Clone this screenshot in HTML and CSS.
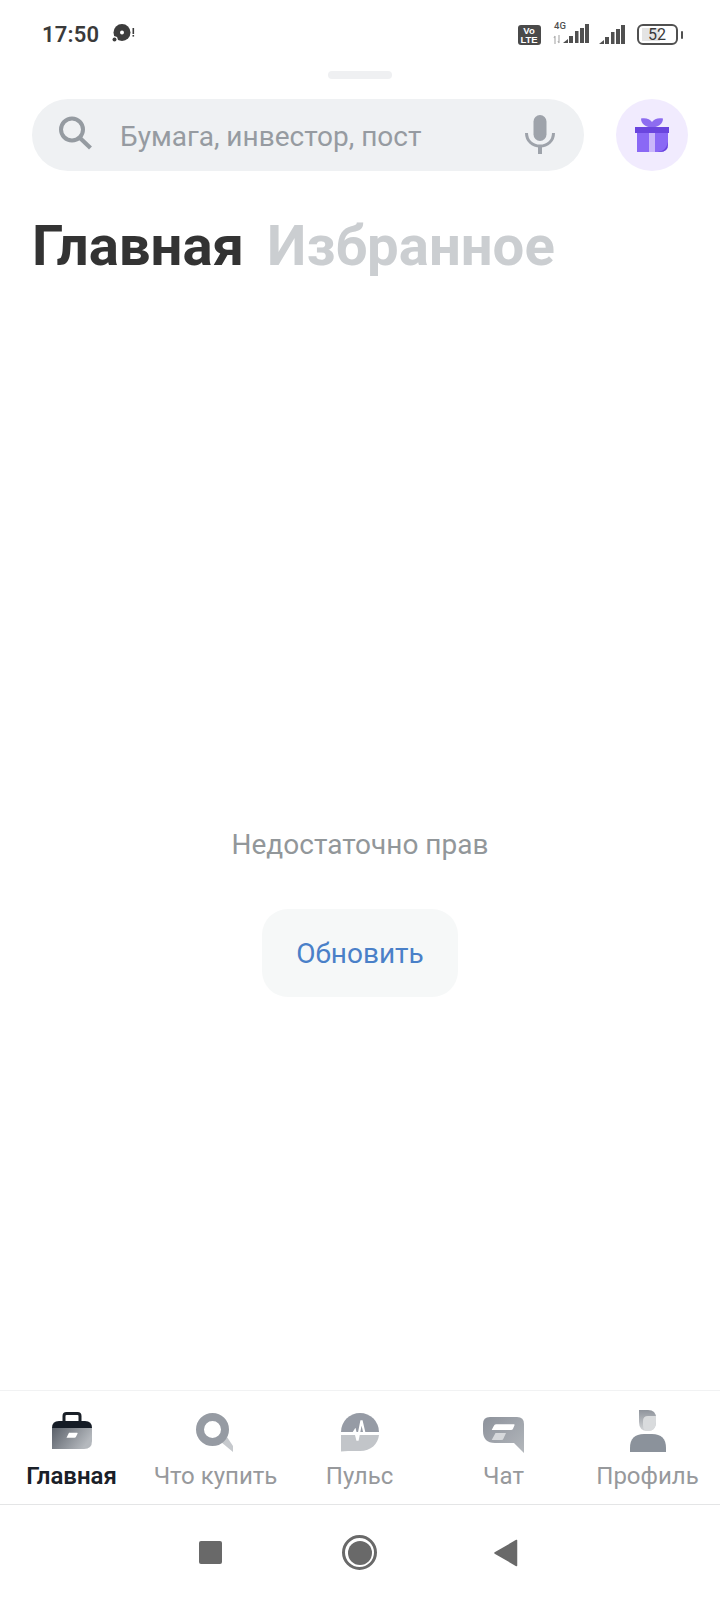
FILE: index.html
```html
<!DOCTYPE html>
<html lang="ru">
<head>
<meta charset="utf-8">
<title>Главная</title>
<link rel="stylesheet" href="styles.css">
</head>
<body>
<div class="screen">
  <header class="status">
    <div class="status-left">
      <span class="time">17:50</span>
      <svg class="disc" width="24" height="20" viewBox="0 0 24 20">
        <circle cx="11" cy="9.500" r="8.500" fill="#3c3c3c"/>
        <circle cx="11" cy="9.500" r="2" fill="#fff"/>
        <circle cx="3.500" cy="16.500" r="3.200" fill="#fff"/>
        <circle cx="3.500" cy="16.500" r="2" fill="#3c3c3c"/>
        <rect x="21.500" y="5" width="1.600" height="6" fill="#3c3c3c"/>
        <rect x="21.500" y="12" width="1.600" height="1.600" fill="#3c3c3c"/>
      </svg>
    </div>
    <div class="status-right">
      <span class="volte">Vo<br>LTE</span>
      <svg width="38" height="26" viewBox="0 -2 38 26" class="sig-4g">
        <text x="1" y="8" class="g4">4G</text>
        <path d="M2 15v8M1 17l1-2M6 14v8M5 20l1 2" stroke="#b0b0b0" stroke-width="1.200" fill="none"/>
        <path d="M10 22l5-4v4zM16 15h4v7h-4zM22 10h3.500v12H22zM27 7h4v15h-4zM32 3h4v19h-4z" fill="#505050"/>
      </svg>
      <svg width="28" height="20" viewBox="0 0 28 20" class="sig">
        <path d="M0 19l5-4v4zM6 12h4v7H6zM12 7h3.500v12H12zM17 4h4v15h-4zM22 0h4v19h-4z" fill="#505050"/>
      </svg>
      <div class="battery">
        <span class="batt-body"><span class="batt-fill"></span><span class="batt-num">52</span></span>
        <span class="batt-tip"></span>
      </div>
    </div>
  </header>

  <div class="grabber"></div>

  <div class="search-row">
    <div class="search">
      <svg class="search-icon" width="36" height="36" viewBox="0 0 36 36">
        <circle cx="15" cy="14.500" r="11" fill="none" stroke="#959ba1" stroke-width="4"/>
        <path d="M23 23l10.500 10" stroke="#959ba1" stroke-width="4.200"/>
      </svg>
      <span class="placeholder">Бумага, инвестор, пост</span>
      <svg class="mic" width="30" height="40" viewBox="0 0 30 40">
        <rect x="8.500" y="0" width="13" height="26" rx="6.500" fill="#9ea3aa"/>
        <path d="M1.500 18c0 8 6 13 13.500 13s13.500-5 13.500-13" fill="none" stroke="#9ea3aa" stroke-width="3"/>
        <rect x="13" y="30" width="4" height="9" fill="#9ea3aa"/>
      </svg>
    </div>
    <div class="gift">
      <svg width="36" height="36" viewBox="0 0 36 36">
        <path d="M18 10.500C12 10.500 7 7 7 1.500 12 .5 16 2 18 5 20 2 24 .5 29 1.500 29 7 24 10.500 18 10.500z" fill="#8d6cf0"/>
        <rect x="1" y="10" width="34" height="6" fill="#6a45de"/>
        <path d="M3 16h31v11q0 8-8 8H3z" fill="#8a68f5"/>
        <rect x="15" y="16" width="6" height="19" fill="#c9b6fa"/>
        <path d="M21 35c7 0 11-2 13-10v2q0 8-8 8z" fill="#6a45de"/>
      </svg>
    </div>
  </div>

  <div class="tabs">
    <span class="tab active">Главная</span>
    <span class="tab">Избранное</span>
  </div>

  <main class="content">
    <p class="message">Недостаточно прав</p>
    <button class="refresh">Обновить</button>
  </main>

  <nav class="bottom-nav">
    <div class="nav-item current">
      <svg width="48" height="50" viewBox="0 0 48 50">
        <defs>
          <linearGradient id="bag" x1="0" y1="0" x2="1" y2="0.400">
            <stop offset="0" stop-color="#5b616a"/>
            <stop offset="1" stop-color="#b4b8bd"/>
          </linearGradient>
        </defs>
        <path d="M16 17v-5q0-2.500 2.500-2.500h11Q32 9.500 32 12v5" fill="none" stroke="#1a2028" stroke-width="3"/>
        <path d="M4 24q0-7 7-7h26q7 0 7 7z" fill="#151c26"/>
        <path d="M4 24h40v13q0 8-8 8H4z" fill="url(#bag)"/>
        <path d="M21 28.700h8q1 0 .5 1l-1.500 3q-.5 1-1.500 1H18.500z" fill="#fff"/>
      </svg>
      <span class="nav-label">Главная</span>
    </div>
    <div class="nav-item">
      <svg width="48" height="50" viewBox="0 0 48 50">
        <path d="M29 38l6-5 6 9v6z" fill="#c6c9cd"/>
        <circle cx="20.500" cy="25.500" r="12.500" fill="none" stroke="#969ba3" stroke-width="8"/>
      </svg>
      <span class="nav-label">Что купить</span>
    </div>
    <div class="nav-item">
      <svg width="48" height="50" viewBox="0 0 48 50">
        <path d="M5 28A19 19 0 0 1 43 28z" fill="#969ba5"/>
        <path d="M5 31H43C42 40 35 47 24 47H12L5 47.500z" fill="#c2c5c9"/>
        <path d="M5 29.500H17l2-3 2.500 10 4-20 3 13h14.500" fill="none" stroke="#fff" stroke-width="2.200"/>
      </svg>
      <span class="nav-label">Пульс</span>
    </div>
    <div class="nav-item">
      <svg width="48" height="50" viewBox="0 0 48 50">
        <defs>
          <linearGradient id="chat" x1="0" y1="0" x2="1" y2="1">
            <stop offset="0" stop-color="#8d929b"/>
            <stop offset="1" stop-color="#b3b7bc"/>
          </linearGradient>
        </defs>
        <path d="M10 13H37q7 0 7 7V49L34 39H15Q3 39 3 27V20q0-7 7-7z" fill="url(#chat)"/>
        <path d="M16 20.300h18q1 0 .5 1l-1.500 3.500q-.5 1.200-2 1.200H11.700l1.800-3.500q1-2.200 2.500-2.200z" fill="#fff"/>
        <path d="M15.500 29H26l-2.500 5.500q-.5 1.500-2 1.500h-9.800z" fill="#d6d8db"/>
      </svg>
      <span class="nav-label">Чат</span>
    </div>
    <div class="nav-item">
      <svg width="48" height="50" viewBox="0 0 48 50">
        <defs>
          <linearGradient id="hair" x1="0" y1="0" x2="0" y2="1">
            <stop offset="0" stop-color="#8f949c"/>
            <stop offset="1" stop-color="#d4d6d8"/>
          </linearGradient>
        </defs>
        <path d="M15 6H24q8 0 8 8v4q0 9-8.500 9T15 18z" fill="url(#hair)"/>
        <path d="M19 17q0-5 5-5h8v6q0 9-8.500 9-4.500 0-4.500-6z" fill="#d9dbdd"/>
        <path d="M6 48V44Q6 30 20 30h8q14 0 14 14v4z" fill="#8b929b"/>
      </svg>
      <span class="nav-label">Профиль</span>
    </div>
  </nav>

  <footer class="sys-nav">
    <span class="sys-square"></span>
    <span class="sys-home"><span class="sys-home-dot"></span></span>
    <svg width="24" height="28" viewBox="0 0 24 28" class="sys-back">
      <path d="M22.500 1.500v25L1 14z" fill="#696969" stroke="#696969" stroke-width="1.500" stroke-linejoin="round"/>
    </svg>
  </footer>
</div>
</body>
</html>
```

FILE: styles.css
```css
* { box-sizing: border-box; }
html, body { margin: 0; padding: 0; background: #fff; }
body { font-family: Roboto, "Noto Sans", sans-serif; }
.screen { width: 720px; height: 1600px; display: flex; flex-direction: column; background: #fff; overflow: hidden; }

.status { height: 71px; flex: none; display: flex; justify-content: space-between; align-items: center; padding: 0 37px 2px 42px; }
.status-left { display: flex; align-items: center; gap: 12px; }
.time { font-size: 22px; font-weight: 600; color: #3a3a3a; letter-spacing: .2px; }
.disc { margin-top: -3px; }
.status-right { display: flex; align-items: center; }
.volte { width: 23px; height: 20px; border-radius: 3px; background: #4a4a4a; color: #fff; font: 700 9.500px/9px "Liberation Sans", sans-serif; text-align: center; padding-top: 1px; margin-right: 12px; }
.sig-4g { margin-top: -5px; margin-right: 8px; overflow: visible; }
.g4 { font: 500 9.500px Roboto, sans-serif; fill: #505050; }
.sig { margin-right: 10px; }
.battery { display: flex; align-items: center; gap: 3px; }
.batt-body { position: relative; width: 41px; height: 21px; border: 2.500px solid #505050; border-radius: 6px; display: flex; align-items: center; justify-content: center; }
.batt-fill { position: absolute; left: 3px; top: 2px; bottom: 2px; width: 18px; background: #e4e4e4; }
.batt-num { position: relative; font-size: 16px; color: #3a3a3a; line-height: 1; }
.batt-tip { width: 2.500px; height: 8px; background: #505050; border-radius: 1px; }

.grabber { flex: none; width: 64px; height: 8px; border-radius: 4px; background: #eff0f2; margin: 0 auto; }

.search-row { flex: none; display: flex; gap: 32px; padding: 20px 32px 0; }
.search { flex: 1; height: 72px; border-radius: 36px; background: #eff1f3; display: flex; align-items: center; padding: 0 30px 0 25px; }
.search-icon { flex: none; margin-top: -4px; }
.placeholder { flex: 1; font-size: 28px; color: #969ba1; margin-left: 27px; padding-top: 2px; }
.mic { flex: none; margin-top: 0; margin-right: -1px; }
.gift { flex: none; width: 72px; height: 72px; border-radius: 50%; background: #f1ebfe; display: flex; align-items: center; justify-content: center; }

.tabs { flex: none; display: flex; gap: 23px; padding: 43px 32px 0; }
.tab { font-size: 56.300px; font-weight: 700; line-height: 64px; color: #cbced1; }
.tab.active { color: #333; }

.content { flex: 1; display: flex; flex-direction: column; align-items: center; padding-top: 549px; }
.message { margin: 0; font-size: 28px; line-height: 36px; color: #92979a; }
.refresh { margin-top: 46px; width: 196px; height: 88px; border: none; border-radius: 26px; background: #f6f8f8; color: #4a80c8; font: 400 28px Roboto, sans-serif; }

.bottom-nav { flex: none; height: 115px; display: grid; grid-template-columns: repeat(5, 144px); border-top: 1px solid #f1f2f3; border-bottom: 1px solid #e4e5e6; }
.nav-item { display: flex; flex-direction: column; align-items: center; justify-content: flex-end; padding-bottom: 14px; gap: 8px; }
.nav-label { font-size: 24px; line-height: 28px; color: #97999c; white-space: nowrap; margin-left: -1px; }
.current .nav-label { color: #1a2028; font-weight: 600; font-size: 24px; }

.sys-nav { flex: none; height: 95px; display: flex; justify-content: center; align-items: center; padding-right: 3px; }
.sys-square { width: 23px; height: 23px; border-radius: 2px; background: #696969; margin-right: 120px; }
.sys-home { width: 35px; height: 35px; border: 3px solid #696969; border-radius: 50%; display: flex; align-items: center; justify-content: center; }
.sys-home-dot { width: 24px; height: 24px; border-radius: 50%; background: #696969; }
.sys-back { margin-left: 117px; }
```
